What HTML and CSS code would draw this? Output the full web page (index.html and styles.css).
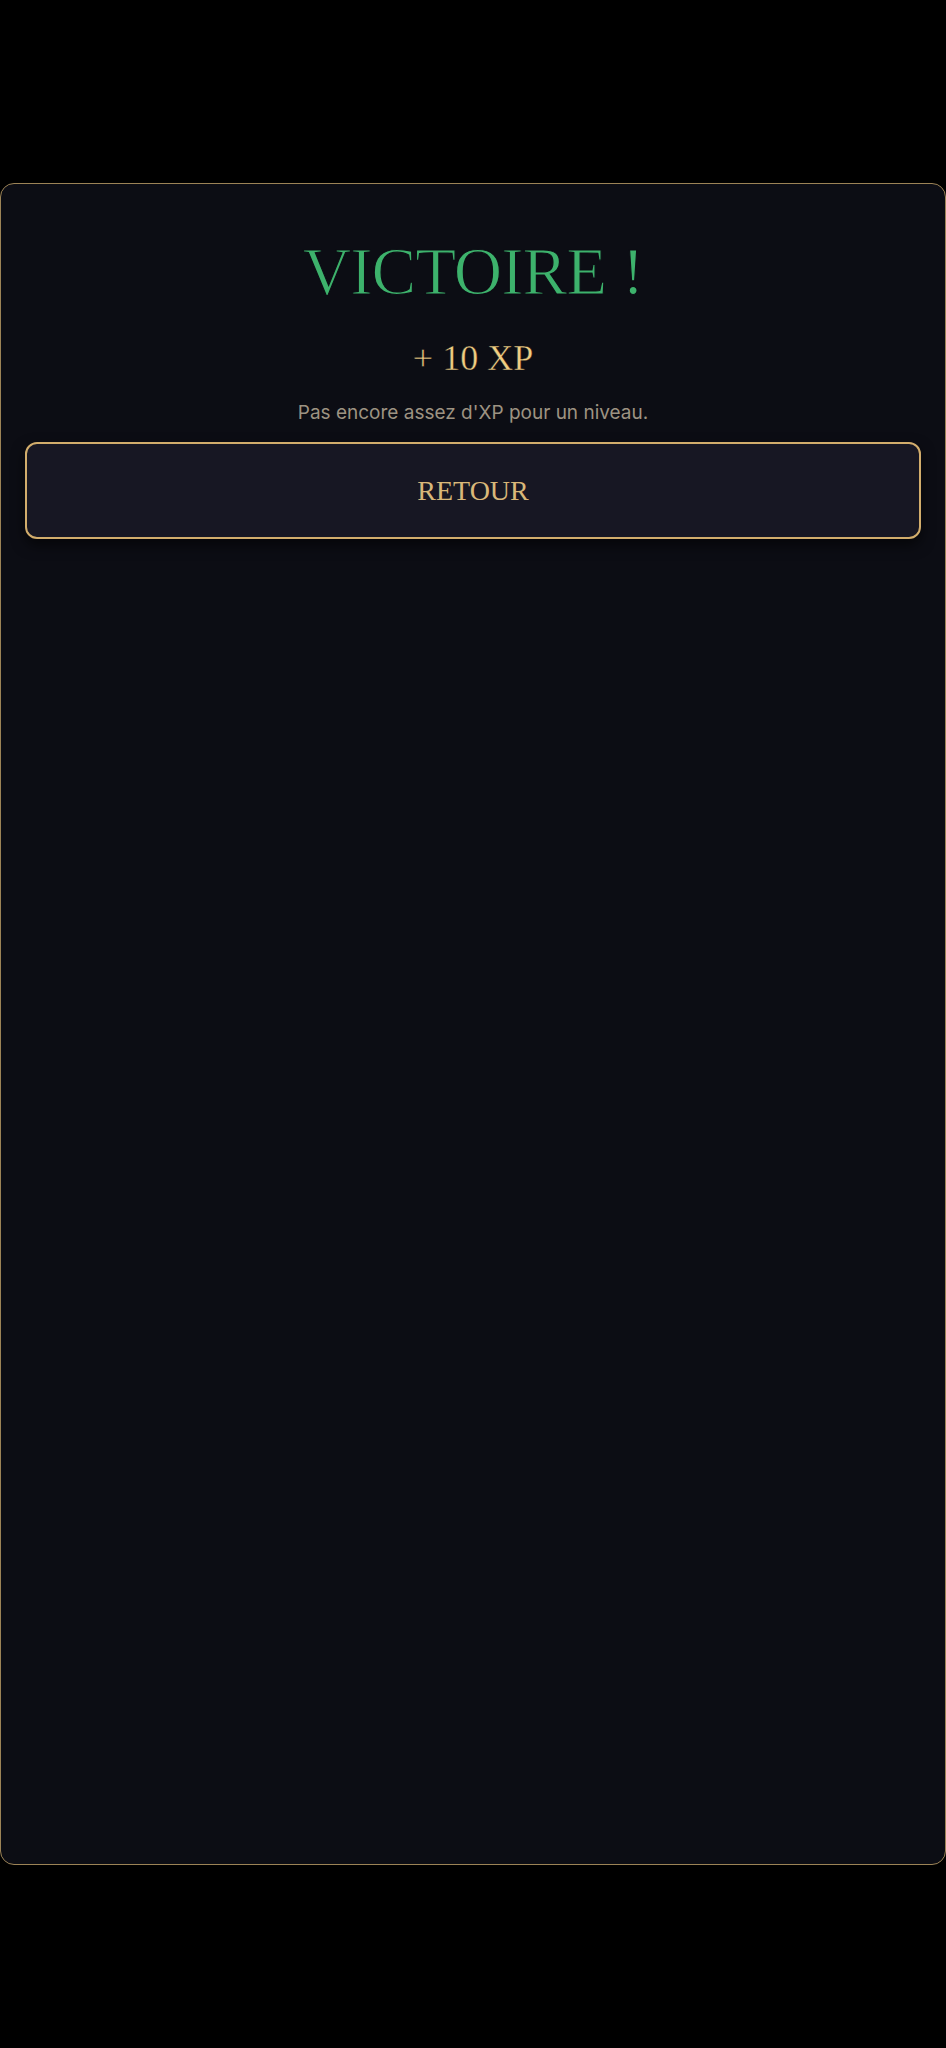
FILE: index.html
```html
<!DOCTYPE html>
<html lang="fr">
<head>
<meta charset="utf-8">
<title>Victoire</title>
<link rel="stylesheet" href="styles.css">
</head>
<body>
<main class="screen">
  <section class="card">
    <h1 class="title">VICTOIRE !</h1>
    <p class="xp">+ 10 XP</p>
    <p class="note">Pas encore assez d'XP pour un niveau.</p>
    <button class="btn" type="button">RETOUR</button>
  </section>
</main>
</body>
</html>
```
FILE: styles.css
```css
html, body {
  margin: 0;
  padding: 0;
  background: #000;
  height: 100%;
}
.screen {
  height: 100vh;
  display: flex;
  align-items: center;
}
.card {
  box-sizing: border-box;
  width: 100%;
  height: 1682px;
  background: #0c0d14;
  border: 1px solid #9c8356;
  border-radius: 14px;
  padding: 54px 24px 24px;
  display: flex;
  flex-direction: column;
  align-items: stretch;
}
.title {
  margin: 0;
  font-family: "Liberation Serif", serif;
  font-weight: 400;
  font-size: 67px;
  line-height: 1;
  letter-spacing: -1px;
  color: #3db26c;
  text-align: center;
  -webkit-text-stroke: 1.2px #0c0d14;
}
.xp {
  margin: 35px 0 0;
  font-family: "Liberation Serif", serif;
  font-size: 36px;
  line-height: 1;
  color: #f0cd82;
  text-align: center;
  -webkit-text-stroke: 0.4px #0c0d14;
}
.note {
  margin: 27px 0 0;
  font-family: Inter, "Noto Sans", sans-serif;
  font-size: 19px;
  line-height: 1;
  color: #9d9382;
  text-align: center;
}
.btn {
  margin-top: 20px;
  box-sizing: border-box;
  height: 97px;
  width: 100%;
  background: #171723;
  border: 2px solid #d2ad6c;
  border-radius: 12px;
  box-shadow: 0 6px 14px rgba(0, 0, 0, 0.6);
  font-family: "Liberation Serif", serif;
  font-size: 28px;
  color: #d9b879;
  cursor: pointer;
}
```
